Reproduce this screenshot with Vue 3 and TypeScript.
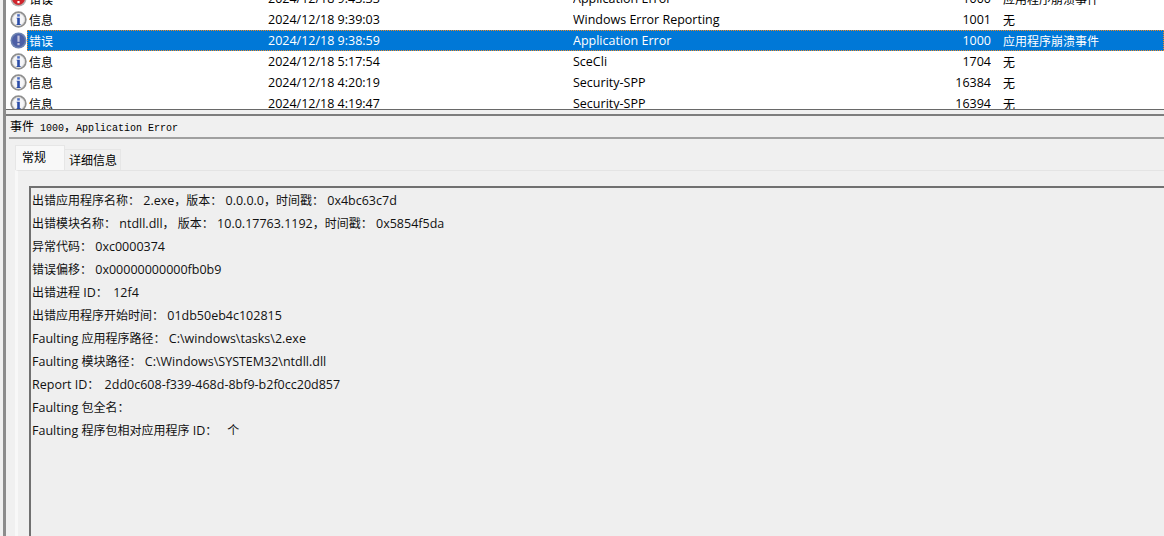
<script setup lang="ts">
type Kind = 'info' | 'error'
interface Row { kind: Kind; level: string; date: string; source: string; id: string; task: string; selected?: boolean }
interface Seg { text: string; cjk: boolean }

const rows: Row[] = [
  { kind: 'error', level: '错误', date: '2024/12/18 9:43:33', source: 'Application Error', id: '1000', task: '应用程序崩溃事件' },
  { kind: 'info', level: '信息', date: '2024/12/18 9:39:03', source: 'Windows Error Reporting', id: '1001', task: '无' },
  { kind: 'error', level: '错误', date: '2024/12/18 9:38:59', source: 'Application Error', id: '1000', task: '应用程序崩溃事件', selected: true },
  { kind: 'info', level: '信息', date: '2024/12/18 5:17:54', source: 'SceCli', id: '1704', task: '无' },
  { kind: 'info', level: '信息', date: '2024/12/18 4:20:19', source: 'Security-SPP', id: '16384', task: '无' },
  { kind: 'info', level: '信息', date: '2024/12/18 4:19:47', source: 'Security-SPP', id: '16394', task: '无' },
]

const details: string[] = [
  '出错应用程序名称： 2.exe，版本： 0.0.0.0，时间戳： 0x4bc63c7d',
  '出错模块名称： ntdll.dll， 版本： 10.0.17763.1192，时间戳： 0x5854f5da',
  '异常代码： 0xc0000374',
  '错误偏移： 0x00000000000fb0b9',
  '出错进程 ID： \u200912f4',
  '出错应用程序开始时间： 01db50eb4c102815',
  'Faulting 应用程序路径： C:\\windows\\tasks\\2.exe',
  'Faulting 模块路径： C:\\Windows\\SYSTEM32\\ntdll.dll',
  'Report ID： \u20092dd0c608-f339-468d-8bf9-b2f0cc20d857',
  'Faulting 包全名：',
  'Faulting 程序包相对应用程序 ID：   个',
]

const CJK = /([\u3000-\u303f\u4e00-\u9fff\uff00-\uffef]+)/
function segments(text: string): Seg[] {
  return text.split(CJK).filter(Boolean).map((t) => ({ text: t, cjk: CJK.test(t) }))
}
</script>

<template>
  <div class="root">
    <div class="frame">
      <div class="list-pane">
        <div class="list">
          <div v-for="(r, i) in rows" :key="i" class="row" :class="{ selected: r.selected }">
            <div class="icon-cell">
              <svg width="17" height="17" viewBox="0 0 17 17">
                <template v-if="r.selected">
                  <circle cx="8.5" cy="8.5" r="8" fill="#6d83b2" />
                  <circle cx="8.5" cy="8.5" r="6.4" fill="#4c5fa6" />
                  <rect x="7.4" y="3.6" width="2.2" height="6.2" fill="#c4c4dc" />
                  <rect x="7.4" y="11" width="2.2" height="2.2" fill="#c4c4dc" />
                </template>
                <template v-else-if="r.kind === 'error'">
                  <circle cx="8.5" cy="8.5" r="8" fill="#b4aeae" />
                  <circle cx="8.5" cy="8.5" r="6.4" fill="#d0242c" />
                  <rect x="7.4" y="3.6" width="2.2" height="6.2" fill="#fff" />
                  <rect x="7.4" y="11" width="2.2" height="2.2" fill="#fff" />
                </template>
                <template v-else>
                  <circle cx="8.5" cy="8.5" r="7.3" fill="#f6f6f8" stroke="#8f8f8f" stroke-width="1.8" />
                  <circle cx="8.5" cy="8.5" r="5.9" fill="none" stroke="#d8d8d8" stroke-width="0.8" />
                  <rect x="7.2" y="3.2" width="2.6" height="2.4" fill="#4a6cc0" />
                  <path d="M6.6 6.7H9.8V12.9H10.6V13.9H6.6V12.9H7.2V7.6H6.6Z" fill="#2a4ca8" />
                </template>
              </svg>
            </div>
            <div class="selectable">
              <div class="cell level">{{ r.level }}</div>
              <div class="cell lat">{{ r.date }}</div>
              <div class="cell source lat">
                <span>{{ r.source }}</span>
                <span>{{ r.id }}</span>
              </div>
              <div class="cell task">{{ r.task }}</div>
            </div>
          </div>
        </div>
      </div>

      <div class="splitter"></div>

      <div class="details-pane">
        <div class="title"><span>事件</span><span class="mono"> 1000</span><span>，</span><span class="mono">Application Error</span></div>
        <div class="tabs">
          <div class="tab active">常规</div>
          <div class="tab">详细信息</div>
        </div>
        <div class="panel">
          <div class="desc">
            <div v-for="(line, i) in details" :key="i" class="line">
              <span v-for="(s, j) in segments(line)" :key="j" :class="{ lat: !s.cjk }">{{ s.text }}</span>
            </div>
          </div>
        </div>
      </div>
    </div>
  </div>
</template>

<style>
html, body { margin: 0; padding: 0; background: #f0f0f0; }
</style>

<style scoped>
.root {
  width: 1164px;
  height: 536px;
  overflow: hidden;
  box-sizing: border-box;
  padding-left: 3px;
  background: #f0f0f0;
  color: #000;
  font-family: "Noto Sans CJK SC", sans-serif;
  font-size: 12px;
}
.lat {
  font-family: "Open Sans", "Noto Sans CJK SC", sans-serif;
  font-size: 12.5px;
}
.frame {
  height: 100%;
  border-left: 3px solid #8c8c8c;
  display: flex;
  flex-direction: column;
}
.list-pane {
  height: 109px;
  flex: none;
  overflow: hidden;
  background: #fff;
  border-bottom: 1px solid #696969;
}
.list { margin-top: -12px; }
.row {
  display: flex;
  height: 21px;
  line-height: 21px;
}
.icon-cell {
  width: 21px;
  flex: none;
  box-sizing: border-box;
  padding: 2px 0 0 4px;
}
.icon-cell svg { display: block; }
.selectable {
  flex: 1;
  display: grid;
  grid-template-columns: 241px 305px 418px 1fr;
}
.selected .selectable {
  background: #0078d7;
  color: #fff;
  outline: 1px dotted #f08a24;
  outline-offset: -1px;
}
.cell { white-space: nowrap; overflow: hidden; }
.level { padding-left: 2px; }
.source { display: flex; justify-content: space-between; }
.task { padding-left: 12px; }
.splitter {
  height: 4px;
  flex: none;
  border-bottom: 2px solid #7d7d7d;
  background: #f0f0f0;
}
.details-pane { flex: 1; min-height: 0; background: #f0f0f0; display: flex; flex-direction: column; }
.title {
  height: 21px;
  line-height: 19px;
  margin-left: 3px;
  padding-left: 1px;
  border-bottom: 2px solid #a0a0a0;
  flex: none;
  white-space: pre;
}
.mono { font-family: "Liberation Mono", monospace; font-size: 10px; }
.tabs {
  display: flex;
  align-items: flex-end;
  flex: none;
  height: 31px;
  padding-left: 9px;
  box-sizing: border-box;
}
.tab {
  height: 21px;
  line-height: 20px;
  width: 56px;
  box-sizing: border-box;
  padding-left: 4px;
  border: 1px solid #e6e6e6;
  border-bottom: none;
  border-left: none;
}
.tab.active {
  width: 50px;
  height: 25px;
  line-height: 22px;
  padding-left: 6px;
  background: #f8f8f8;
  border-left: 1px solid #e6e6e6;
}
.panel {
  flex: 1;
  min-height: 0;
  margin-left: 9px;
  border-left: 3px solid #f8f8f8;
  border-top: 1px solid #e4e4e4;
  padding: 15px 0 0 11px;
}
.desc {
  height: 100%;
  box-sizing: border-box;
  border-top: 2px solid #707070;
  border-left: 2px solid #707070;
  background: #efefef;
  padding: 0 0 0 1px;
  color: #111;
}
.line { height: 23px; line-height: 23px; white-space: pre; }
</style>
